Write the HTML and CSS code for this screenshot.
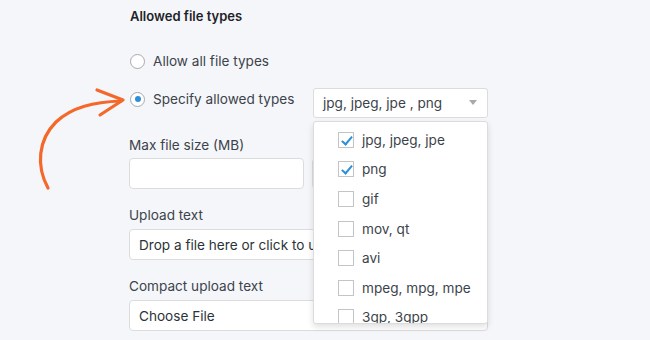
FILE: index.html
```html
<!DOCTYPE html>
<html lang="en">
<head>
    <meta charset="UTF-8">
    <meta name="viewport" content="width=device-width, initial-scale=1.0">
    <title>Upload field settings</title>
    <link rel="stylesheet" href="styles.css">
</head>
<body>
    <!-- hand drawn pointer -->
    <svg class="pointer" width="140" height="200" viewBox="0 0 140 200">
        <path d="M48 188 C 36 166, 38 140, 56 122 C 72 107, 94 102, 121 101" fill="none" stroke="#f4682a" stroke-width="3.2" stroke-linecap="round"/>
        <path d="M97 90 L 123 100 L 100 115" fill="none" stroke="#f4682a" stroke-width="3.2" stroke-linecap="round" stroke-linejoin="round"/>
    </svg>

    <div class="settings">
        <h4 class="section-title">Allowed file types</h4>

        <label class="radio-row">
            <span class="radio"></span>
            <span>Allow all file types</span>
        </label>

        <div class="radio-row specify">
            <label class="radio-label">
                <span class="radio checked"></span>
                <span>Specify allowed types</span>
            </label>
            <div class="select-wrap">
                <div class="select">
                    <span>jpg, jpeg, jpe , png</span>
                    <span class="caret"></span>
                </div>
                <ul class="dropdown">
                    <li><span class="check on"></span>jpg, jpeg, jpe</li>
                    <li><span class="check on"></span>png</li>
                    <li><span class="check"></span>gif</li>
                    <li><span class="check"></span>mov, qt</li>
                    <li><span class="check"></span>avi</li>
                    <li><span class="check"></span>mpeg, mpg, mpe</li>
                    <li><span class="check"></span>3gp, 3gpp</li>
                </ul>
            </div>
        </div>

        <div class="field first">
            <div class="field-label">Max file size (MB)</div>
            <div class="two-col">
                <input class="input" type="text">
                <input class="input" type="text">
            </div>
        </div>

        <div class="field">
            <div class="field-label">Upload text</div>
            <input class="input" type="text" value="Drop a file here or click to upload">
        </div>

        <div class="field">
            <div class="field-label">Compact upload text</div>
            <input class="input" type="text" value="Choose File">
        </div>
    </div>
</body>
</html>
```

FILE: styles.css
```css
body {
    margin: 0;
    background-color: #f5f6fa;
    font-family: Inter, "Noto Sans", sans-serif;
    color: #3c434a;
    font-size: 13.6px;
    position: relative;
    height: 340px;
    overflow: hidden;
}

.pointer {
    position: absolute;
    left: 0;
    top: 0;
}

.settings {
    width: 359px;
    margin-left: 129px;
    padding-top: 8px;
}

.section-title {
    margin: 0 0 0 1px;
    font-size: 13px;
    font-weight: 600;
    color: #1d2327;
    line-height: 16px;
}

.radio-row {
    display: flex;
    align-items: center;
    gap: 8px;
    margin-top: 29px;
    margin-left: 1px;
    line-height: 16px;
}

.radio-label {
    display: flex;
    align-items: center;
    gap: 8px;
    padding-top: 3px;
}

.radio {
    width: 15px;
    height: 15px;
    border: 1px solid #a7aaad;
    border-radius: 50%;
    background: white;
    box-sizing: border-box;
    display: flex;
    align-items: center;
    justify-content: center;
}

.radio.checked::after {
    content: '';
    width: 6px;
    height: 6px;
    border-radius: 50%;
    background: #2e8fd6;
}

.radio-row.specify {
    margin-top: 19px;
    align-items: flex-start;
    justify-content: space-between;
}

.select-wrap {
    position: relative;
    width: 175px;
}

.select {
    height: 30px;
    box-sizing: border-box;
    border: 1px solid #dcdcde;
    border-radius: 3px;
    background: white;
    display: flex;
    align-items: center;
    justify-content: space-between;
    padding: 0 10px 0 9px;
    color: #3c434a;
}

.caret {
    width: 0;
    height: 0;
    border-left: 4px solid transparent;
    border-right: 4px solid transparent;
    border-top: 5px solid #a7aaad;
    margin-top: -2px;
}

.dropdown {
    position: absolute;
    top: 33px;
    left: 0;
    width: 175px;
    height: 203px;
    box-sizing: border-box;
    margin: 0;
    padding: 3px 0 0;
    list-style: none;
    background: white;
    border: 1px solid #dcdcde;
    border-radius: 3px;
    box-shadow: 0 3px 6px rgba(0,0,0,0.12);
    overflow: hidden;
    z-index: 10;
}

.dropdown li {
    display: flex;
    align-items: center;
    gap: 8px;
    height: 29.6px;
    padding-left: 24px;
}

.check {
    width: 16px;
    height: 16px;
    box-sizing: border-box;
    border: 1px solid #c3c4c7;
    background: white;
    position: relative;
}

.check.on::after {
    content: '';
    position: absolute;
    left: 5px;
    top: 1px;
    width: 4px;
    height: 9px;
    border-right: 2.5px solid #2e8fd6;
    border-bottom: 2.5px solid #2e8fd6;
    transform: rotate(40deg);
}

.field {
    margin-top: 17px;
}

.field.first {
    margin-top: 18px;
}

.field-label {
    line-height: 18px;
    margin-bottom: 5px;
}

.field.first .field-label {
    margin-bottom: 4px;
}

.two-col {
    display: grid;
    grid-template-columns: 175px 176px;
    gap: 8px;
}

.input {
    display: block;
    width: 100%;
    height: 31px;
    box-sizing: border-box;
    border: 1px solid #dcdcde;
    border-radius: 4px;
    background: white;
    padding: 0 9px;
    font-family: inherit;
    font-size: 13.6px;
    color: #2c3338;
}
```
